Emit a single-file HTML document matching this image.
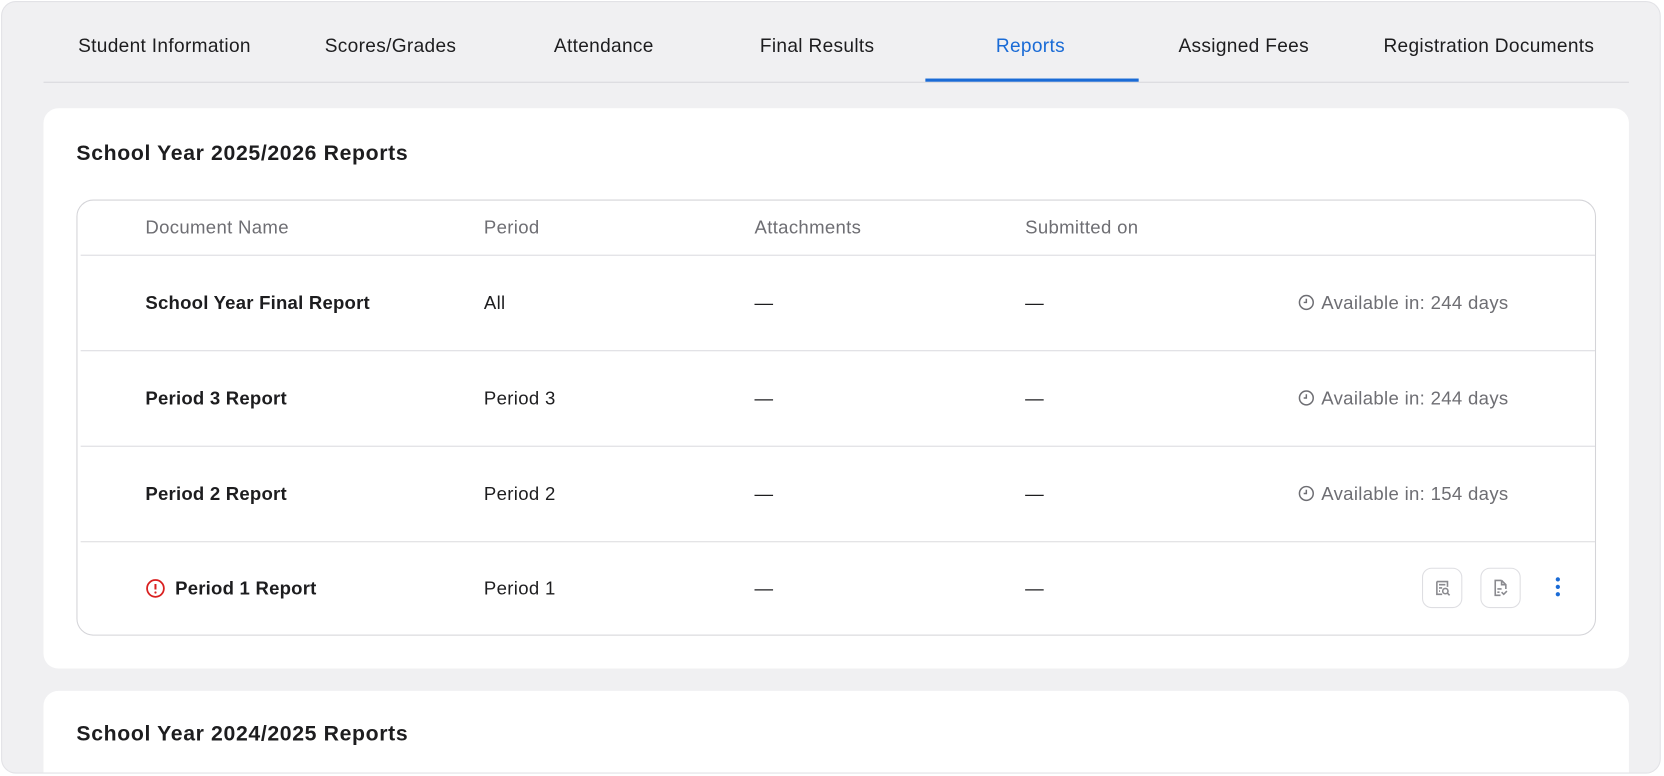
<!DOCTYPE html>
<html><head><style>
html,body{margin:0;width:1664px;height:776px;background:#fff;font-family:"Liberation Sans",sans-serif;overflow:hidden}
.wrap{position:absolute;left:0;top:0;width:1568px;height:731px;transform:scale(1.0612);transform-origin:0 0;overflow:hidden}
.frame{position:absolute;left:1px;top:1px;width:1564px;height:728px;background:#f0f0f2;border:1px solid #e2e2e6;border-radius:14px;overflow:hidden;box-sizing:border-box}
.tabs{position:absolute;left:39px;top:0;width:1494px;height:75px;border-bottom:1px solid #d8d8dc}
.tab{position:absolute;top:31px;font-size:18px;letter-spacing:0.3px;color:#1d1d1f;transform:translateX(-50%);white-space:nowrap}
.tab.active{color:#1a6bd6}
.ul{position:absolute;left:831px;top:72px;width:201px;height:3px;background:#1a6bd6}
.card{position:absolute;left:39px;width:1494px;background:#fff;border-radius:14px}
.title{position:absolute;left:31px;font-size:20px;letter-spacing:0.6px;font-weight:bold;color:#1d1d1f}
.table{position:absolute;left:31px;top:86px;width:1430px;height:409px;border:1px solid #d4d4d8;border-radius:16px}
.cell{position:absolute;font-size:17.5px;letter-spacing:0.3px;color:#1d1d1f;white-space:nowrap}
.hd{color:#6e6e73}
.sep{position:absolute;left:3px;right:0;height:1px;background:#dcdce0}
.b{font-weight:bold;letter-spacing:0.2px}
.avail{color:#6e6e73}
.btn{position:absolute;width:38px;height:38px;border:1px solid #dedee2;border-radius:9px;box-sizing:border-box}
</style></head><body>
<div class="wrap">
<div class="frame">
<div class="tabs">
<div class="tab" style="left:114px">Student Information</div>
<div class="tab" style="left:327px">Scores/Grades</div>
<div class="tab" style="left:528px">Attendance</div>
<div class="tab" style="left:729px">Final Results</div>
<div class="tab active" style="left:930px">Reports</div>
<div class="tab" style="left:1131px">Assigned Fees</div>
<div class="tab" style="left:1362px">Registration Documents</div>
<div class="ul"></div>
</div>
<div class="card" style="top:100px;height:528px">
<div class="title" style="top:32px">School Year 2025/2026 Reports</div>
<div class="table">
<div class="cell hd" style="left:64px;top:15px">Document Name</div>
<div class="cell hd" style="left:383px;top:15px">Period</div>
<div class="cell hd" style="left:638px;top:15px">Attachments</div>
<div class="cell hd" style="left:893px;top:15px">Submitted on</div>
<div class="sep" style="top:51px"></div>
<div class="cell b" style="left:64px;top:86px">School Year Final Report</div>
<div class="cell" style="left:383px;top:86px">All</div>
<div class="cell" style="left:638px;top:86px">—</div>
<div class="cell" style="left:893px;top:86px">—</div>
<div class="cell avail" style="left:1150px;top:86px"><svg width="16" height="16" viewBox="0 0 16 16" style="vertical-align:-2px;margin-right:6px"><circle cx="8" cy="8" r="6.5" fill="none" stroke="#6e6e73" stroke-width="1.4"/><path d="M8 4.5V8H5.5" fill="none" stroke="#6e6e73" stroke-width="1.4"/></svg>Available in: 244 days</div>
<div class="sep" style="top:141px"></div>
<div class="cell b" style="left:64px;top:176px">Period 3 Report</div>
<div class="cell" style="left:383px;top:176px">Period 3</div>
<div class="cell" style="left:638px;top:176px">—</div>
<div class="cell" style="left:893px;top:176px">—</div>
<div class="cell avail" style="left:1150px;top:176px"><svg width="16" height="16" viewBox="0 0 16 16" style="vertical-align:-2px;margin-right:6px"><circle cx="8" cy="8" r="6.5" fill="none" stroke="#6e6e73" stroke-width="1.4"/><path d="M8 4.5V8H5.5" fill="none" stroke="#6e6e73" stroke-width="1.4"/></svg>Available in: 244 days</div>
<div class="sep" style="top:231px"></div>
<div class="cell b" style="left:64px;top:266px">Period 2 Report</div>
<div class="cell" style="left:383px;top:266px">Period 2</div>
<div class="cell" style="left:638px;top:266px">—</div>
<div class="cell" style="left:893px;top:266px">—</div>
<div class="cell avail" style="left:1150px;top:266px"><svg width="16" height="16" viewBox="0 0 16 16" style="vertical-align:-2px;margin-right:6px"><circle cx="8" cy="8" r="6.5" fill="none" stroke="#6e6e73" stroke-width="1.4"/><path d="M8 4.5V8H5.5" fill="none" stroke="#6e6e73" stroke-width="1.4"/></svg>Available in: 154 days</div>
<div class="sep" style="top:321px"></div>
<svg style="position:absolute;left:64px;top:356px" width="19" height="19" viewBox="0 0 18 18"><circle cx="9" cy="9" r="7.5" fill="none" stroke="#d92020" stroke-width="1.6"/><path d="M9 5v5" stroke="#d92020" stroke-width="1.8"/><circle cx="9" cy="12.6" r="1" fill="#d92020"/></svg>
<div class="cell b" style="left:92px;top:355px">Period 1 Report</div>
<div class="cell" style="left:383px;top:355px">Period 1</div>
<div class="cell" style="left:638px;top:355px">—</div>
<div class="cell" style="left:893px;top:355px">—</div>
<div class="btn" style="left:1267px;top:346px"><svg width="36" height="36" viewBox="0 0 36 36"><path d="M13 12h10v5M13 12v12h5M15 15h6M15 18h3M15 21h1" fill="none" stroke="#8a8a8f" stroke-width="1.5"/><circle cx="21" cy="21" r="2.5" fill="none" stroke="#8a8a8f" stroke-width="1.5"/><path d="M23 23l2 2" stroke="#8a8a8f" stroke-width="1.5"/></svg></div>
<div class="btn" style="left:1322px;top:346px"><svg width="36" height="36" viewBox="0 0 36 36"><path d="M19 11h-6v14h5M19 11l4 4v4M19 11v4h4M15 19h4M15 22h2M19 22l2 2 3-3" fill="none" stroke="#8a8a8f" stroke-width="1.5"/></svg></div>
<svg style="position:absolute;left:1391px;top:354px" width="8" height="22"><circle cx="4" cy="3" r="2" fill="#1a6bd6"/><circle cx="4" cy="10" r="2" fill="#1a6bd6"/><circle cx="4" cy="17" r="2" fill="#1a6bd6"/></svg>
</div>
</div>
<div class="card" style="top:649px;height:79px;border-radius:14px 14px 0 0">
<div class="title" style="top:30px">School Year 2024/2025 Reports</div>
</div>
</div>
</div>
</body></html>
